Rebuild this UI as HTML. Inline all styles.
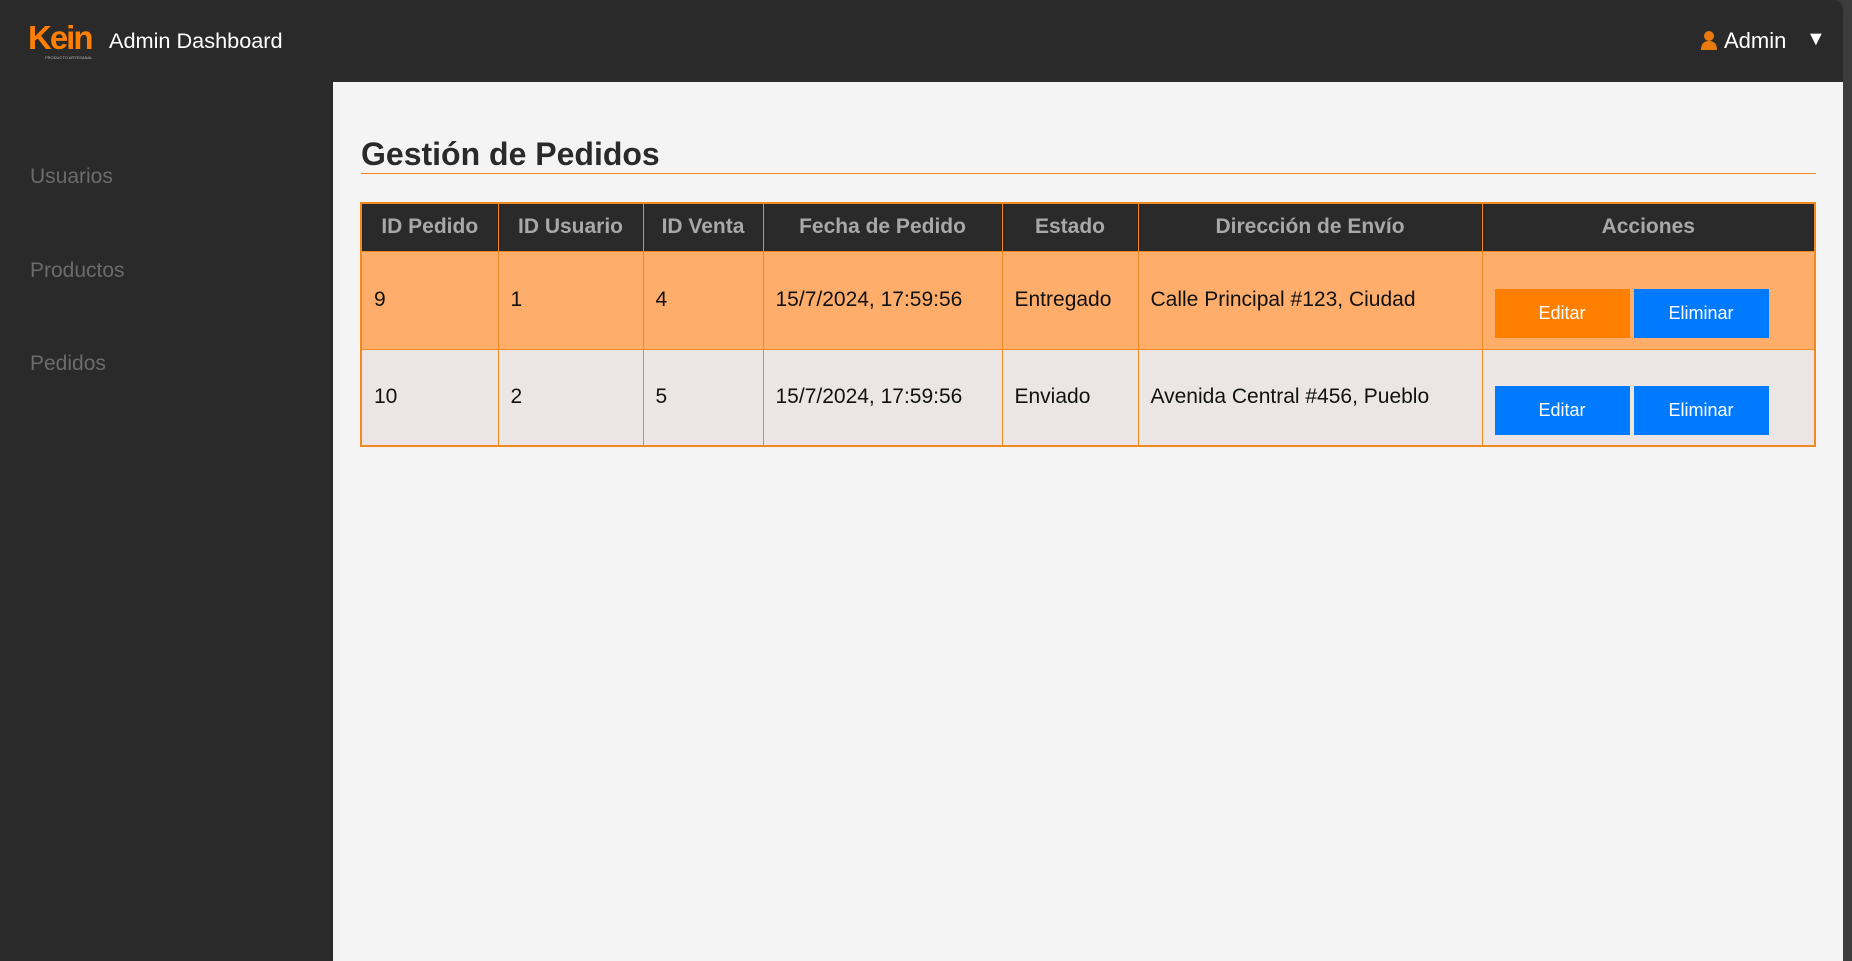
<!DOCTYPE html>
<html><head><meta charset="utf-8"><style>
*{margin:0;padding:0;box-sizing:border-box}
body{width:1852px;height:961px;background:#3a3a3a;font-family:"Liberation Sans",Arial,sans-serif;position:relative;overflow:hidden}
.hdr{position:absolute;left:0;top:0;width:1843px;height:82px;background:#2a2a2a;border-top-right-radius:10px}
.side{position:absolute;left:0;top:82px;width:333px;height:879px;background:#2a2a2a}
.main{position:absolute;left:333px;top:82px;width:1510px;height:879px;background:#f4f4f4}
.strip{position:absolute;left:1843px;top:0;width:9px;height:961px;background:#3c3c3c}
.side a{position:absolute;left:30px;color:#6b6b6b;font-size:21px;text-decoration:none}
h1{position:absolute;left:361px;top:136px;font-size:32px;color:#2a2a2a;font-weight:bold}
.line{position:absolute;left:361px;top:173px;width:1455px;height:1px;background:#f08a1e}
table{position:absolute;left:360px;top:202px;width:1456px;border-collapse:collapse;border:2px solid #f08a1e}
th{background:#2a2a2a;color:#a8a8a8;font-size:21px;font-weight:bold;height:48px;border:1px solid #f08a1e}
td{font-size:21px;color:#111;padding-left:12px;border:1px solid #f08a1e;text-align:left}
tr.r1 td{background:#ffad6b;height:98px}
tr.r2 td{background:#ebe5e5;height:97px}
.btn{display:inline-block;width:135px;height:49px;line-height:49px;text-align:center;color:#fff;font-size:18px;background:#007bff;margin-right:4px;vertical-align:middle}
.btn.o{background:#ff7f00}
</style></head><body>
<div class="hdr">
 <div style="position:absolute;left:28px;top:20px;color:#ff7f00;font-weight:bold;font-size:33px;letter-spacing:-2px;line-height:36px">Kein</div>
 <div style="position:absolute;left:45px;top:55px;color:#bbb;font-size:4px">PRODUCTO ARTESANAL</div>
 <div style="position:absolute;left:109px;top:28px;color:#fff;font-size:21.7px">Admin Dashboard</div>
 <svg style="position:absolute;left:1700px;top:30px" width="18" height="20" viewBox="0 0 18 20"><circle cx="9" cy="6" r="5" fill="#e87a10"/><path d="M1 20 Q1 11 9 11 Q17 11 17 20Z" fill="#e87a10"/></svg>
 <div style="position:absolute;left:1724px;top:28px;color:#fff;font-size:22px">Admin</div>
 <div style="position:absolute;left:1806px;top:28px;color:#fff;font-size:20px">▼</div>
</div>
<div class="side">
 <a style="top:83px">Usuarios</a>
 <a style="top:177px">Productos</a>
 <a style="top:270px">Pedidos</a>
</div>
<div class="main"></div>
<div class="strip"></div>
<h1>Gestión de Pedidos</h1>
<div class="line"></div>
<table>
<tr><th style="width:137px">ID Pedido</th><th style="width:145px">ID Usuario</th><th style="width:120px">ID Venta</th><th style="width:239px">Fecha de Pedido</th><th style="width:136px">Estado</th><th style="width:344px">Dirección de Envío</th><th>Acciones</th></tr>
<tr class="r1"><td>9</td><td>1</td><td>4</td><td>15/7/2024, 17:59:56</td><td>Entregado</td><td>Calle Principal #123, Ciudad</td><td style="padding-top:26px"><span class="btn o">Editar</span><span class="btn">Eliminar</span></td></tr>
<tr class="r2"><td>10</td><td>2</td><td>5</td><td>15/7/2024, 17:59:56</td><td>Enviado</td><td>Avenida Central #456, Pueblo</td><td style="padding-top:26px"><span class="btn">Editar</span><span class="btn">Eliminar</span></td></tr>
</table>
</body></html>
